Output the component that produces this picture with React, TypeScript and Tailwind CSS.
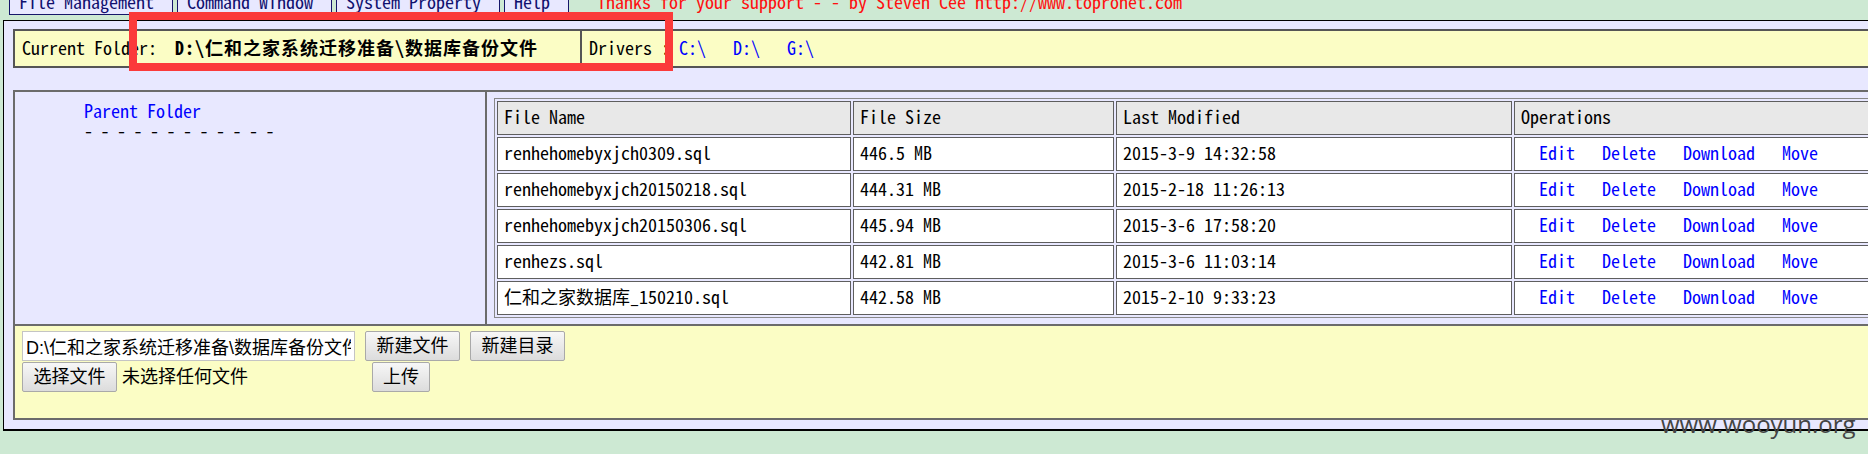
import React from 'react';

const files = [
  { name: 'renhehomebyxjch0309.sql', size: '446.5 MB', time: '2015-3-9 14:32:58' },
  { name: 'renhehomebyxjch20150218.sql', size: '444.31 MB', time: '2015-2-18 11:26:13' },
  { name: 'renhehomebyxjch20150306.sql', size: '445.94 MB', time: '2015-3-6 17:58:20' },
  { name: 'renhezs.sql', size: '442.81 MB', time: '2015-3-6 11:03:14' },
  { name: '仁和之家数据库_150210.sql', size: '442.58 MB', time: '2015-2-10 9:33:23' },
];

const tabs = ['File Management', 'Command Window', 'System Property', 'Help'];

function Button({ label, className = '' }: { label: string; className?: string }) {
  return (
    <button
      className={`h-[30px] px-[10px] border border-[#a9a9a9] rounded-[2px] bg-linear-to-b from-[#f7f7f7] to-[#dcdcdc] text-[18px] leading-none text-black ${className}`}
    >
      {label}
    </button>
  );
}

export default function App() {
  return (
    <div className="relative w-[1868px] h-[454px] overflow-hidden bg-[#cde9d3] font-['Noto_Sans_Mono_CJK_SC','Liberation_Mono','Noto_Sans_CJK_SC',monospace] text-[18px] text-black">
      {/* Tabs */}
      <div className="flex items-end h-[15px] pl-[9px] gap-[4px]">
        {tabs.map((t) => (
          <div
            key={t}
            className="h-[28px] pl-[9px] pr-[18px] border border-t-0 border-[#16166a] bg-[#e8e8ff] text-[#10106e] leading-[28px] whitespace-pre"
          >
            {t}
          </div>
        ))}
        <div className="ml-[24px] h-[28px] leading-[28px] text-[#ff1010] whitespace-pre">
          Thanks for your support - - by Steven Cee http://www.topronet.com
        </div>
      </div>

      {/* Main panel */}
      <div className="mt-[5px] ml-[3px] w-[1900px] border-l border-t border-b-2 border-black bg-[#e8e8ff] pt-[8px] pl-[9px] pb-[9px]">
        {/* Current folder bar */}
        <div className="flex h-[39px] border-2 border-[#555] bg-[#fbfdc5]">
          <div className="flex shrink-0 items-center w-[567px] pl-[7px] pb-[2px] border-r-2 border-[#555] whitespace-pre">
            <span>Current Folder:  </span>
            <span className="font-bold tracking-[1px]">D:\仁和之家系统迁移准备\数据库备份文件</span>
          </div>
          <div className="flex items-center pl-[7px] pb-[2px] whitespace-pre">
            <span>Drivers : </span>
            <a className="text-[#0000ff]">C:\</a>
            <span>   </span>
            <a className="text-[#0000ff]">D:\</a>
            <span>   </span>
            <a className="text-[#0000ff]">G:\</a>
          </div>
        </div>

        {/* File browser */}
        <div className="flex mt-[22px] border-2 border-b-0 border-[#6b6b6b]">
          <div className="w-[472px] shrink-0 border-r-2 border-[#6b6b6b] pt-[8px] pl-[69px]">
            <div className="text-[#0000ff] leading-[20px]">Parent Folder</div>
            <div className="leading-[20px] tracking-[7.5px] whitespace-pre">------------</div>
          </div>
          <div className="shrink-0 pl-[7px] pt-[6px] pb-[6px]">
            <table className="table-fixed border-separate border-spacing-[2px] border border-[#888] bg-[#e8e8ff]">
              <thead>
                <tr className="bg-[#e8e8e8]">
                  <th className="w-[354px] h-[34px] px-[6px] pb-[3px] border border-[#5e5e5e] text-left font-normal">File Name</th>
                  <th className="w-[261px] h-[34px] px-[6px] pb-[3px] border border-[#5e5e5e] text-left font-normal">File Size</th>
                  <th className="w-[396px] h-[34px] px-[6px] pb-[3px] border border-[#5e5e5e] text-left font-normal">Last Modified</th>
                  <th className="w-[420px] h-[34px] px-[6px] pb-[3px] border border-[#5e5e5e] text-left font-normal">Operations</th>
                </tr>
              </thead>
              <tbody>
                {files.map((f) => (
                  <tr key={f.name} className="bg-white">
                    <td className="h-[34px] px-[6px] pb-[3px] border border-[#5e5e5e] whitespace-pre">{f.name}</td>
                    <td className="h-[34px] px-[6px] pb-[3px] border border-[#5e5e5e] whitespace-pre">{f.size}</td>
                    <td className="h-[34px] px-[6px] pb-[3px] border border-[#5e5e5e] whitespace-pre">{f.time}</td>
                    <td className="h-[34px] pl-[24px] pb-[3px] border border-[#5e5e5e] whitespace-pre text-[#0000ff]">
                      <a>Edit</a>
                      <a className="ml-[27px]">Delete</a>
                      <a className="ml-[27px]">Download</a>
                      <a className="ml-[27px]">Move</a>
                    </td>
                  </tr>
                ))}
              </tbody>
            </table>
          </div>
        </div>

        {/* Actions */}
        <div className="h-[96px] border-2 border-[#6b6b6b] bg-[#fbfdc5] pt-[5px] pl-[7px] font-['Liberation_Sans','Noto_Sans_CJK_SC',sans-serif]">
          <div className="flex items-center gap-[10px]">
            <input
              readOnly
              value="D:\仁和之家系统迁移准备\数据库备份文件"
              className="w-[333px] h-[30px] px-[3px] border border-[#c4c4c4] bg-white text-[18px] text-black outline-none"
            />
            <Button label="新建文件" className="w-[95px]" />
            <Button label="新建目录" className="w-[95px]" />
          </div>
          <div className="flex items-center mt-[1px]">
            <div className="flex items-center w-[350px]">
              <Button label="选择文件" className="w-[95px]" />
              <span className="ml-[5px] text-[18px]">未选择任何文件</span>
            </div>
            <Button label="上传" className="w-[58px]" />
          </div>
        </div>
      </div>

      {/* Annotation box */}
      <div className="absolute left-[129px] top-[12px] w-[544px] h-[59px] border-[8px] border-[#fb3a3a]" />

      {/* Watermark */}
      <div className="absolute left-[1661px] top-[410px] font-['Open_Sans',sans-serif] text-[24px] leading-[28px] text-[#444]">
        www.wooyun.org
      </div>
    </div>
  );
}
